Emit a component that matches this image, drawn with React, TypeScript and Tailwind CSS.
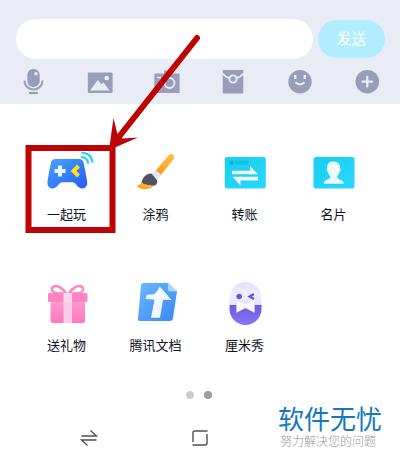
import type { ReactNode } from "react";

const tools: { label: string; icon: ReactNode }[] = [
  {
    label: "语音",
    icon: (
      <svg viewBox="0 0 26 26" className="size-[26px]" fill="none">
        <rect x="7.300" y="0" width="12.400" height="18" rx="6" fill="#999eb8" />
        <circle cx="16" cy="4.800" r="1.700" fill="#eaecf5" />
        <path d="M4.500 11.500c0 5.500 4 9 9 9s9-3.500 9-9" stroke="#999eb8" strokeWidth="2" />
        <path d="M9 24h9" stroke="#999eb8" strokeWidth="2.200" />
      </svg>
    ),
  },
  {
    label: "图片",
    icon: (
      <svg viewBox="0 0 26 26" className="size-[26px]">
        <rect x=".8" y="3.500" width="24.800" height="20.500" rx="1" fill="#999eb8" />
        <path d="M3 21.500 10.800 11l3.700 4.300 2-1.800 6 8z" fill="#eaecf5" />
        <circle cx="19.700" cy="9" r="2.300" fill="#eaecf5" />
      </svg>
    ),
  },
  {
    label: "拍照",
    icon: (
      <svg viewBox="0 0 26 26" className="size-[26px]" fill="none">
        <path d="M1 4.500h9V1.500h9v3h6q.6 0 .6.600v18.400q0 .6-.6.600H1q-.6 0-.6-.6V5.100q0-.6.6-.6z" fill="#999eb8" />
        <circle cx="15.500" cy="14" r="5" stroke="#eaecf5" strokeWidth="1.800" />
        <path d="M3 8.500h4" stroke="#eaecf5" strokeWidth="1.600" />
      </svg>
    ),
  },
  {
    label: "红包",
    icon: (
      <svg viewBox="0 0 26 26" className="size-[26px]" fill="none">
        <rect x="2.700" y="1" width="20.600" height="23.500" rx="1" fill="#999eb8" />
        <path d="M2.500 4.500Q6 8.500 9.500 9M23.500 4.500Q20 8.500 16.500 9" stroke="#eaecf5" strokeWidth="1.800" />
        <circle cx="13" cy="10" r="3.600" stroke="#eaecf5" strokeWidth="1.900" />
      </svg>
    ),
  },
  {
    label: "表情",
    icon: (
      <svg viewBox="0 0 26 26" className="size-[26px]" fill="none">
        <circle cx="13" cy="12.700" r="11.700" fill="#999eb8" />
        <path d="M8.300 6v4M17.700 6v4" stroke="#eaecf5" strokeWidth="2.300" />
        <path d="M9 13.800q4 3.500 8 0" stroke="#eaecf5" strokeWidth="2" strokeLinecap="round" />
      </svg>
    ),
  },
  {
    label: "更多",
    icon: (
      <svg viewBox="0 0 26 26" className="size-[26px]" fill="none">
        <circle cx="13.300" cy="12.700" r="11.800" fill="#999eb8" />
        <path d="M13.300 7.900v9.600M8.500 12.700h9.600" stroke="#eaecf5" strokeWidth="2.200" strokeLinecap="round" />
      </svg>
    ),
  },
];

const apps: { label: string; icon: ReactNode }[] = [
  {
    label: "一起玩",
    icon: (
      <svg viewBox="0 0 48 48" className="size-12 overflow-visible" fill="none">
        <defs>
          <linearGradient id="pad" x1="0" y1="0" x2="1" y2="1">
            <stop stopColor="#47a4ff" />
            <stop offset="1" stopColor="#245cf5" />
          </linearGradient>
        </defs>
        <path d="M8 14.500Q9 11 12.500 11H36q3.500 0 4.500 3.500 2 8 3.600 19 .5 4-2 6-2.800 2-6 0-2-1.500-3.500-3.500-1.200-1.700-3.500-1.700h-9.600q-2.300 0-3.500 1.700-1.500 2-3.500 3.500-3.200 2-6 0-2.500-2-2-6Q6 22.500 8 14.500z" fill="url(#pad)" />
        <path d="M17 17.500v11M11.500 23h11" stroke="#edf6ff" strokeWidth="4" />
        <path d="m35.500 18-5 5 5 5" stroke="#ffe01f" strokeWidth="4" />
        <path d="M38.500 4.500q9.800.5 11 10" stroke="#16d3f6" strokeWidth="2.200" />
        <path d="M38 9q6.500.5 7.500 6.500" stroke="#16d3f6" strokeWidth="2.200" />
      </svg>
    ),
  },
  {
    label: "涂鸦",
    icon: (
      <svg viewBox="1 0 48 48" className="size-12">
        <defs>
          <linearGradient id="brush" x1="0" y1="1" x2="1" y2="0">
            <stop stopColor="#ff981c" />
            <stop offset="1" stopColor="#ffc33b" />
          </linearGradient>
        </defs>
        <path d="M24 23.500 38 7q2-2 4.200-.2t.5 4.200L29.500 27.500z" fill="url(#brush)" />
        <path d="m20 26.500 4.500-4.500 6 5-5.200 6z" fill="#dfe9f5" />
        <path d="M20.500 25.500c-5-.5-9 4-10 9L14 37l8.500 1c3.500-1 4.200-4 3.300-6z" fill="#505261" />
        <path d="M6 37.500q3.500-.5 4.500-3.500 2 3.700 4.500 1.800 2 3.200 3.600.8 1.900 2 4.400.2c-1.500 3.500-7 5-11.500 4.200-3-.5-5-1.700-5.500-3.500z" fill="url(#brush)" />
      </svg>
    ),
  },
  {
    label: "转账",
    icon: (
      <svg viewBox="0 0 48 48" className="size-12">
        <defs>
          <linearGradient id="cyan" x1="0" y1="0" x2="1" y2="1">
            <stop stopColor="#18cff0" />
            <stop offset="1" stopColor="#29d8fc" />
          </linearGradient>
        </defs>
        <rect x="3.800" y="9" width="41" height="31.500" rx="2.500" fill="url(#cyan)" />
        <circle cx="10.500" cy="14.700" r="2.200" fill="#0bafd8" />
        <path d="M14 12.800h13.500v3.800H14z" fill="#15bfe2" />
        <path d="M11 22.700h18V18l8 8.200H11zM37 28.700v3.700H19.500v5L11.500 28.700z" fill="#eefaff" />
      </svg>
    ),
  },
  {
    label: "名片",
    icon: (
      <svg viewBox="0 0 48 48" className="size-12">
        <rect x="3.500" y="9" width="41" height="31.500" rx="2.500" fill="url(#cyan)" />
        <path d="M23.500 13.500c4.500 0 7 3 6.500 7 1 .5.600 3-.6 3.600-.5 2.200-1.200 3.200-2 4-.2 1.800.3 2.500 2 3.300 3 1 4.300 1.800 4.300 4.300H13.800c0-2.500 1.200-3.300 4.200-4.300 2-.8 2.300-1.600 2-3.300-1-1-1.700-2.300-2-4-1.500-.6-1.700-3.100-.7-3.600-.6-4.500 1.700-7 6.200-7z" fill="#eefaff" />
      </svg>
    ),
  },
  {
    label: "送礼物",
    icon: (
      <svg viewBox="0 0 48 48" className="size-12" fill="none">
        <defs>
          <linearGradient id="gift" x1="0" y1="0" x2="0" y2="1">
            <stop stopColor="#ff9dce" />
            <stop offset="1" stopColor="#ff78c0" />
          </linearGradient>
        </defs>
        <path d="M23 14.500C15 15 9.500 13.800 9 11c-.6-4 4-5 7.500-3 3 1.600 5 4 6.500 6.500M26 14.500c8 .5 13.500-.7 14-3.500.6-4-4-5-7.500-3-3 1.600-5 4-6.500 6.500" stroke="#ff87c4" strokeWidth="2.600" />
        <rect x="7.500" y="20" width="34.500" height="24" rx="2" fill="url(#gift)" />
        <rect x="5" y="14" width="39.500" height="9" rx="1.500" fill="#ff83c2" />
        <path d="M20.500 23h8.500v21h-8.500z" fill="#ffcce8" />
        <path d="M20.500 14h8.500v9h-8.500z" fill="#ffd8ee" />
      </svg>
    ),
  },
  {
    label: "腾讯文档",
    icon: (
      <svg viewBox="0 0 48 48" className="size-12">
        <defs>
          <linearGradient id="doc" x1="0" y1="0" x2="1" y2="1">
            <stop stopColor="#69b7ff" />
            <stop offset="1" stopColor="#3888f5" />
          </linearGradient>
        </defs>
        <path d="M11.500 4H36l9 8.500-4 26.500q-.5 3-3.500 3H8q-2.500 0-2-2.500L9 6.500Q9.300 4 11.500 4z" fill="url(#doc)" />
        <path d="m36 4 9 8.500h-6.500q-3 0-2.700-3z" fill="#a9d4ff" />
        <path d="M27.800 7.500 39.500 21l-8.500-.3-3 18h-9l3.500-18-9-1 1.500-4.200q3 .5 7.300-.5 3.500-3 5.500-7.500z" fill="#f2f8ff" />
      </svg>
    ),
  },
  {
    label: "厘米秀",
    icon: (
      <svg viewBox="0 0 48 48" className="size-12" fill="none">
        <defs>
          <linearGradient id="capsule" x1="0" y1="0" x2="0" y2="1">
            <stop offset="0" stopColor="#e3deff" />
            <stop offset=".3" stopColor="#f0edff" />
            <stop offset=".53" stopColor="#e6e1ff" />
            <stop offset=".53" stopColor="#6a5ade" />
            <stop offset="1" stopColor="#8877fa" />
          </linearGradient>
        </defs>
        <rect x="8.500" y="3" width="32" height="43" rx="16" fill="url(#capsule)" />
        <circle cx="18.200" cy="17.500" r="2.800" fill="#6554dd" />
        <path d="m33 15-4.500 2.500L33 20" stroke="#6554dd" strokeWidth="2.200" />
        <path d="m15.500 21.500 9 3.500 9-3.500v12l-9-4.500-9 4.500z" fill="#fbfaff" stroke="#dcd6ff" strokeWidth=".4" />
      </svg>
    ),
  },
];

function Composer() {
  return (
    <header className="bg-[#eaecf5] pt-[19px]">
      <form
        className="flex items-center gap-[5px] pr-[15px] pl-4"
        onSubmit={(e) => e.preventDefault()}
      >
        <input
          type="text"
          aria-label="消息"
          className="h-10 min-w-0 flex-1 rounded-full bg-white px-5 text-base outline-none"
        />
        <button
          type="submit"
          className="h-[38px] w-[67px] rounded-full bg-[#b0edff] text-[15px] text-white"
        >
          发送
        </button>
      </form>
      <div className="grid grid-cols-6 pt-[10px] pb-[9px]">
        {tools.map(({ label, icon }) => (
          <button key={label} type="button" aria-label={label} className="flex justify-center">
            {icon}
          </button>
        ))}
      </div>
    </header>
  );
}

function AppGrid() {
  return (
    <section className="grid grid-cols-4 gap-y-[54px] px-[22px] pt-11">
      {apps.map(({ label, icon }) => (
        <button
          key={label}
          type="button"
          className="flex flex-col items-center gap-[9px] text-[13px] leading-5 whitespace-nowrap text-[#10121e]"
        >
          {icon}
          {label}
        </button>
      ))}
    </section>
  );
}

function Annotation() {
  return (
    <svg
      viewBox="0 0 180 240"
      className="pointer-events-none absolute top-0 left-5 h-60 w-[180px]"
      fill="none"
    >
      <rect x="8.500" y="148" width="84" height="82" stroke="#bd0303" strokeWidth="6" />
      <path d="M177 38 98 138" stroke="#bd0303" strokeWidth="6" strokeLinecap="round" />
      <path d="m89 150 4.500-32 4 16.500 5 4 15.500-1z" fill="#bd0303" />
    </svg>
  );
}

function BottomBar() {
  return (
    <footer className="grid grid-cols-[1fr_46px_1fr] pt-[7px]">
      <button type="button" aria-label="切换" className="flex justify-center pt-[23px]">
        <svg viewBox="0 0 18 18" className="size-[18px]" fill="none" stroke="#505050" strokeWidth="1.300">
          <path d="M1.500 7h15l-6-5.500M16.500 11h-15l6 5.500" />
        </svg>
      </button>
      <button type="button" aria-label="主页" className="flex justify-center pt-[23px]">
        <svg viewBox="0 0 18 18" className="size-[18px]" fill="none" stroke="#505050" strokeWidth="1.400">
          <path d="M2 13V4q0-2 2-2h12.500M16 5v9q0 2-2 2H1.500" />
        </svg>
      </button>
      <div className="flex flex-col items-end pr-[18px] whitespace-nowrap">
        <p className="text-[26px] leading-7 text-[#1677bd]">软件无忧</p>
        <p className="w-[102px] text-xs leading-4 font-light text-[#999999]">努力解决您的问题</p>
      </div>
    </footer>
  );
}

export default function App() {
  return (
    <main className="relative min-h-screen overflow-hidden bg-white font-['Liberation_Sans','Noto_Sans_CJK_SC',sans-serif]">
      <Composer />
      <AppGrid />
      <div className="flex justify-center gap-[10px] pt-[35px] pr-[2px]">
        <span className="size-2 rounded-full bg-[#cdcdcd]" />
        <span className="size-2 rounded-full bg-[#9d9d9d]" />
      </div>
      <BottomBar />
      <Annotation />
    </main>
  );
}
